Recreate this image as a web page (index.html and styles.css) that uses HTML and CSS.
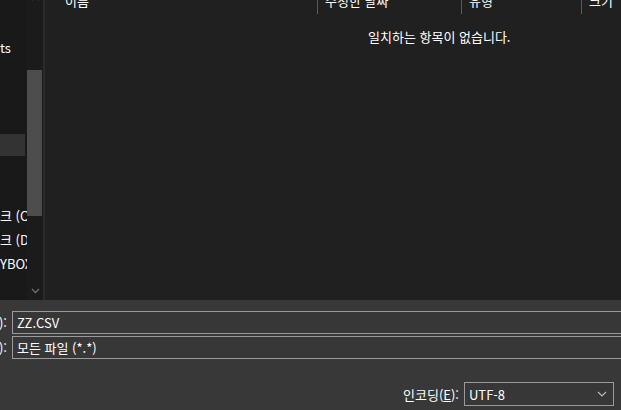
FILE: index.html
```html
<!DOCTYPE html>
<html lang="ko">
<head>
  <meta charset="UTF-8" />
  <meta name="viewport" content="width=device-width, initial-scale=1.0"/>
  <title>다른 이름으로 저장</title>
  <link rel="stylesheet" href="styles.css">
</head>
<body>

  <div class="dialog">
    <!-- Browser area: nav pane + file list -->
    <div class="browser">
      <nav class="nav">
        <div class="nav-list">
          <div class="nav-item"></div>
          <div class="nav-item"><span class="nav-text">ts</span></div>
          <div class="nav-item"></div>
          <div class="nav-item"></div>
          <div class="nav-item"></div>
          <div class="nav-item selected"></div>
          <div class="nav-item"></div>
          <div class="nav-item"></div>
          <div class="nav-item"><span class="nav-text">크 (C:)</span></div>
          <div class="nav-item"><span class="nav-text">크 (D:)</span></div>
          <div class="nav-item"><span class="nav-text">YBOX</span></div>
        </div>
        <div class="scrollbar">
          <svg class="arrow arrow-up" width="9" height="6" viewBox="0 0 9 6">
            <path d="M1 5 L4.5 1.5 L8 5" fill="none" stroke="#6e6e6e" stroke-width="1.3"/>
          </svg>
          <div class="thumb"></div>
          <svg class="arrow arrow-down" width="9" height="6" viewBox="0 0 9 6">
            <path d="M1 1 L4.5 4.5 L8 1" fill="none" stroke="#6e6e6e" stroke-width="1.3"/>
          </svg>
        </div>
      </nav>
      <div class="split"></div>
      <section class="files">
        <div class="columns">
          <div class="col col-name">이름</div>
          <div class="col col-date">수정한 날짜</div>
          <div class="col col-type">유형</div>
          <div class="col col-size">크기</div>
        </div>
        <p class="empty">일치하는 항목이 없습니다.</p>
      </section>
    </div>

    <!-- Save form -->
    <div class="form">
      <div class="form-rows">
        <div class="label"><span>파일 이름(N):</span></div>
        <div class="field">ZZ.CSV</div>
        <div class="label"><span>파일 형식(T):</span></div>
        <div class="field">모든 파일 (*.*)</div>
      </div>
      <div class="encoding">
        <span class="enc-label">인코딩(<u>E</u>):</span>
        <div class="combo">
          <span>UTF-8</span>
          <svg width="10" height="6" viewBox="0 0 10 6">
            <path d="M1 1 L5 5 L9 1" fill="none" stroke="#bdbdbd" stroke-width="1.1"/>
          </svg>
        </div>
      </div>
    </div>
  </div>

</body>
</html>
```

FILE: styles.css
```css
body {
  margin: 0;
  width: 621px;
  height: 410px;
  overflow: hidden;
  background-color: #383838;
  color: #ffffff;
  font-family: "Noto Sans CJK KR", "Noto Sans", sans-serif;
  font-size: 13px;
}

.dialog {
  display: flex;
  flex-direction: column;
  height: 410px;
}

.browser {
  display: flex;
  height: 300px;
  background-color: #202020;
  overflow: hidden;
}

/* Navigation pane */
.nav {
  display: flex;
  background-color: #191919;
}

.nav-list {
  width: 27px;
  overflow: hidden;
  padding-top: 12px;
}

.nav-item {
  height: 24px;
  display: flex;
  align-items: center;
  width: 25px;
  white-space: nowrap;
}

.nav-item.selected {
  background-color: #333333;
  height: 22px;
  margin-top: 2px;
}

.nav-text {
  display: block;
  line-height: 16px;
}

.scrollbar {
  width: 16px;
  display: flex;
  flex-direction: column;
  align-items: center;
  background-color: #1b1b1b;
}

.arrow-up {
  margin-top: -5px;
}

.thumb {
  width: 15px;
  margin-left: -1px;
  height: 146px;
  margin-top: 69px;
  background-color: #4d4d4d;
}

.arrow-down {
  margin-top: auto;
  margin-bottom: 6px;
}

.split {
  width: 2px;
  background-color: #2b2b2b;
}

/* File list */
.files {
  flex: 1;
}

.columns {
  display: flex;
  margin-top: -10px;
  height: 24px;
  line-height: 22px;
}

.col {
  padding-left: 7px;
  border-right: 1px solid #5a5a5a;
  white-space: nowrap;
}

.col-name {
  width: 252px;
  padding-left: 20px;
}

.col-date {
  width: 136px;
}

.col-type {
  width: 112px;
}

.col-size {
  flex: 1;
  border-right: none;
}

.empty {
  margin: 15px 0 0;
  padding-left: 323px;
  line-height: 16px;
}

/* Save form */
.form {
  flex: 1;
  padding-top: 11px;
  background-color: #383838;
}

.form-rows {
  display: grid;
  grid-template-columns: 7px 1fr;
  column-gap: 5px;
  row-gap: 2px;
  margin-right: -20px;
}

.label {
  display: flex;
  justify-content: flex-end;
  align-items: center;
  overflow: hidden;
  white-space: nowrap;
}

.field {
  height: 21px;
  line-height: 21px;
  padding-left: 4px;
  border: 1px solid #9a9a9a;
  background-color: #373737;
}

.encoding {
  display: flex;
  justify-content: flex-end;
  align-items: center;
  gap: 5px;
  margin-top: 23px;
  padding-right: 7px;
}

.combo {
  width: 138px;
  height: 22px;
  padding: 0 6px 0 4px;
  display: flex;
  align-items: center;
  justify-content: space-between;
  border: 1px solid #9a9a9a;
  background-color: #373737;
}
```
